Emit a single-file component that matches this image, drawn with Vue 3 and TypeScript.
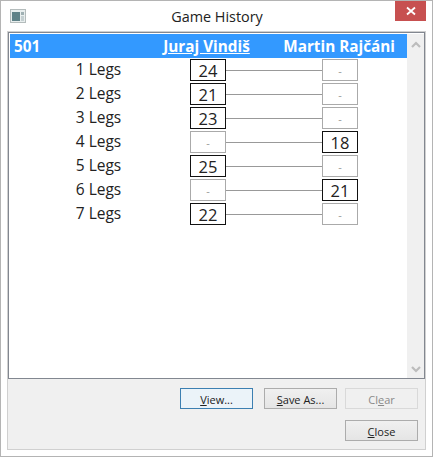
<template>
  <div class="window">
    <header class="titlebar">
      <svg class="app-icon" width="16" height="14" viewBox="0 0 16 14">
        <rect x="0.5" y="0.5" width="15" height="13" fill="#e8eeee" stroke="#b4bcbc" />
        <rect x="2" y="3" width="8" height="9" fill="#5f8288" />
        <rect x="11" y="3" width="3" height="3" fill="#9fb0b3" />
        <rect x="11" y="7" width="3" height="5" fill="#c4cfd1" />
      </svg>
      <span class="title">Game History</span>
      <div class="close-x">
        <svg width="10" height="10" viewBox="0 0 10 10">
          <path d="M1 1.5 L9 8.5 M9 1.5 L1 8.5" stroke="#fff" stroke-width="1.8" />
        </svg>
      </div>
    </header>

    <main class="panel">
      <div class="listbox">
        <div class="content">
          <div class="head">
            <span class="game">501</span>
            <span class="player active">Juraj Vindiš</span>
            <span class="player other">Martin Rajčáni</span>
          </div>
          <div v-for="leg in legs" :key="leg.name" class="row">
            <span class="leg-name">{{ leg.name }}</span>
            <div class="scores">
              <span class="score" :class="{ empty: !leg.a }">{{ leg.a || '-' }}</span>
              <span class="link"></span>
              <span class="score" :class="{ empty: !leg.b }">{{ leg.b || '-' }}</span>
            </div>
          </div>
        </div>
        <div class="scrollbar">
          <svg width="10" height="7" viewBox="0 0 10 7"><path d="M1 6 L5 2 L9 6" fill="none" stroke="#bcbcbc" stroke-width="2.2" /></svg>
          <svg width="10" height="7" viewBox="0 0 10 7"><path d="M1 1 L5 5 L9 1" fill="none" stroke="#bcbcbc" stroke-width="2.2" /></svg>
        </div>
      </div>

      <div class="buttons">
        <div class="btn-row">
          <button class="btn focus"><u>V</u>iew...</button>
          <button class="btn save"><u>S</u>ave As...</button>
          <button class="btn off" disabled>Cl<u>e</u>ar</button>
        </div>
        <div class="btn-row">
          <button class="btn"><u>C</u>lose</button>
        </div>
      </div>
    </main>
  </div>
</template>

<script setup lang="ts">
interface Leg {
  name: string
  a?: number
  b?: number
}

const legs: Leg[] = [
  { name: '1 Legs', a: 24 },
  { name: '2 Legs', a: 21 },
  { name: '3 Legs', a: 23 },
  { name: '4 Legs', b: 18 },
  { name: '5 Legs', a: 25 },
  { name: '6 Legs', b: 21 },
  { name: '7 Legs', a: 22 },
]
</script>

<style>
html,
body {
  margin: 0;
  background: #fff;
}
</style>

<style scoped>
.window {
  width: 433px;
  height: 457px;
  box-sizing: border-box;
  display: flex;
  flex-direction: column;
  background: #fff;
  border: 1px solid #b4b4b4;
  padding: 0 6px 6px;
  font-family: "Open Sans", sans-serif;
  color: #222;
}

.titlebar {
  position: relative;
  height: 30px;
  flex: none;
  display: flex;
  align-items: center;
  justify-content: center;
}

.app-icon {
  position: absolute;
  left: 3px;
  top: 8px;
}

.title {
  font-size: 14.4px;
  color: #222;
  margin-left: 1px;
  margin-top: 1px;
}

.close-x {
  position: absolute;
  right: 0;
  top: 0;
  width: 31px;
  height: 20px;
  background: #c75050;
  display: flex;
  align-items: center;
  justify-content: center;
}

.panel {
  flex: 1;
  min-height: 0;
  display: flex;
  flex-direction: column;
  background: #f0f0f0;
  border: 1px solid #d0d0d0;
}

.listbox {
  height: 347px;
  width: 417px;
  box-sizing: border-box;
  flex: none;
  display: flex;
  background: #fff;
  border: 1px solid #828790;
  padding: 1px 0 0 1px;
}

.content {
  flex: 1;
  min-width: 0;
}

.head {
  height: 24px;
  background: #3399ff;
  color: #fff;
  font-weight: 700;
  font-size: 15.3px;
  display: grid;
  grid-template-columns: 134px 125px 1fr;
  align-items: center;
  line-height: 24px;
}

.game {
  padding-left: 4px;
}

.player {
  text-align: center;
}

.active {
  text-decoration: underline;
}

.other {
  text-align: right;
  padding-right: 12px;
}

.row {
  height: 24px;
  display: flex;
  align-items: center;
  font-size: 15.5px;
}

.leg-name {
  width: 177px;
  margin-right: 3px;
  flex: none;
  text-align: center;
  line-height: 22px;
  padding-bottom: 2px;
}

.scores {
  display: flex;
  align-items: center;
}

.score {
  width: 36px;
  height: 22px;
  box-sizing: border-box;
  flex: none;
  display: flex;
  align-items: center;
  justify-content: center;
  border: 1px solid #111;
  background: #fff;
  font-size: 16.5px;
}

.score.empty {
  border-color: #aaa;
  color: #999;
  font-size: 11px;
}

.link {
  width: 96px;
  height: 1px;
  flex: none;
  background: #999;
}

.scrollbar {
  width: 17px;
  flex: none;
  display: flex;
  flex-direction: column;
  align-items: center;
  justify-content: space-between;
  padding: 7px 0 5px;
  box-sizing: border-box;
  background: #f0f0f0;
}

.buttons {
  flex: 1;
  display: flex;
  flex-direction: column;
  gap: 11px;
  padding: 9px 7px 0 0;
}

.btn-row {
  display: flex;
  justify-content: flex-end;
  gap: 8px;
}

.btn {
  width: 73px;
  height: 21px;
  box-sizing: border-box;
  padding: 1px 0 0;
  border: 1px solid #acacac;
  background: linear-gradient(#f0f0f0, #e5e5e5);
  font-family: "Open Sans", sans-serif;
  font-size: 11px;
  color: #222;
}

.btn.focus {
  border-color: #3c7fb1;
  margin-right: 3px;
  background: #ebf3f9;
}

.btn.off {
  border-color: #d9d9d9;
  background: #f0f0f0;
  color: #8a8a8a;
}
</style>
